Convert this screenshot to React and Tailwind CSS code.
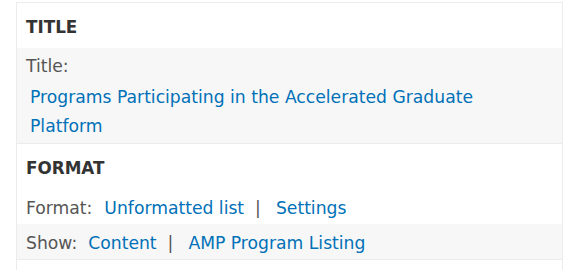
export default function App() {
  const font = { fontFamily: '"DejaVu Sans", Verdana, sans-serif' };
  return (
    <div className="w-[570px] h-[270px] bg-white pt-[2px] pl-[16px]" style={font}>
      <div className="w-[547px] border border-[#ececec] border-b-0">
        <div className="h-[45px] flex items-center px-[9px] pt-[5px] bg-white">
          <span className="text-[16.8px] font-bold text-[#333]">TITLE</span>
        </div>
        <div className="h-[96px] bg-[#f7f7f7] border-b border-[#ececec] pl-[9px] pt-[6px]">
          <div className="text-[17.2px] text-[#555] leading-[24px]">Title:</div>
          <div className="pl-[4px] mt-[5px] text-[17.2px] leading-[29px] text-[#0071b8] w-[490px]">
            Programs Participating in the Accelerated Graduate Platform
          </div>
        </div>
        <div className="h-[45px] flex items-center px-[9px] pt-[5px] bg-white">
          <span className="text-[16.8px] font-bold text-[#333]">FORMAT</span>
        </div>
        <div className="h-[35px] flex items-center px-[9px] pt-[4px] bg-white text-[17.2px]">
          <span className="text-[#555]">Format:</span>
          <span className="ml-[12px] text-[#0071b8]">Unformatted list</span>
          <span className="ml-[11px] text-[#555]">|</span>
          <span className="ml-[15px] text-[#0071b8]">Settings</span>
        </div>
        <div className="h-[36px] flex items-center px-[9px] pt-[4px] bg-[#f7f7f7] text-[17.2px] border-b border-[#ececec]">
          <span className="text-[#555]">Show:</span>
          <span className="ml-[11px] text-[#0071b8]">Content</span>
          <span className="ml-[11px] text-[#555]">|</span>
          <span className="ml-[15px] text-[#0071b8]">AMP Program Listing</span>
        </div>
        <div className="h-[20px] bg-white"></div>
      </div>
    </div>
  );
}
